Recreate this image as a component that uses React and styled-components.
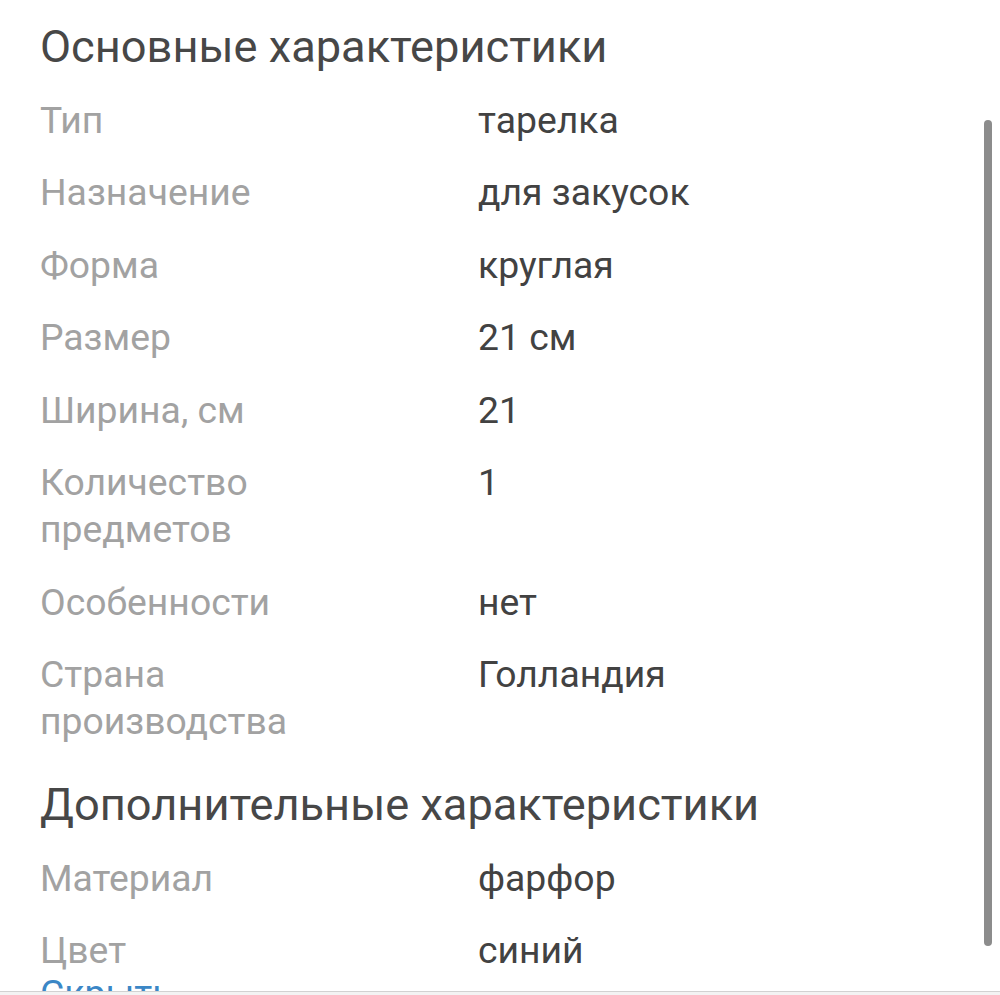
import React from "react";
import styled, { createGlobalStyle } from "styled-components";

const Global = createGlobalStyle`
  html, body { margin: 0; padding: 0; background: #ffffff; overflow: hidden; }
  body { font-family: Roboto, "Noto Sans", "Liberation Sans", sans-serif; }
`;

const Screen = styled.div`
  position: relative;
  height: 995px;
  overflow: hidden;
  background: #ffffff;
`;

const Content = styled.div`
  padding: 0 40px;
`;

const Heading = styled.h2`
  margin: ${(p) => (p.$first ? "19px" : "19.25px")} 0 8.75px;
  font-size: 45.2px;
  line-height: 56px;
  font-weight: 400;
  color: #474747;
  white-space: nowrap;
`;

const List = styled.div`
  display: flex;
  flex-direction: column;
`;

const Row = styled.div`
  display: grid;
  grid-template-columns: 438px 1fr;
  padding: 12.75px 0;
  font-size: 37.3px;
  line-height: 47px;
`;

const Label = styled.div`
  color: #a2a2a2;
`;

const Value = styled.div`
  color: #424242;
`;

const Link = styled.a`
  display: block;
  margin-top: -17px;
  font-size: 37.3px;
  line-height: 47px;
  color: #3b87c6;
  text-decoration: none;
`;

const ScrollThumb = styled.div`
  position: absolute;
  right: 8px;
  top: 120px;
  width: 8px;
  height: 826px;
  border-radius: 4px;
  background: #8c8c8c;
`;

const BottomEdge = styled.div`
  position: absolute;
  left: 0;
  right: 0;
  bottom: 0;
  height: 3px;
  border-top: 1px solid #d2d2d2;
  background: #f3f3f3;
`;

const main = [
  ["Тип", "тарелка"],
  ["Назначение", "для закусок"],
  ["Форма", "круглая"],
  ["Размер", "21 см"],
  ["Ширина, см", "21"],
  [["Количество", "предметов"], "1"],
  ["Особенности", "нет"],
  [["Страна", "производства"], "Голландия"],
];

const extra = [
  ["Материал", "фарфор"],
  ["Цвет", "синий"],
];

const Rows = ({ items }) => (
  <List>
    {items.map(([l, v]) => (
      <Row key={Array.isArray(l) ? l.join(" ") : l}>
        <Label>
          {Array.isArray(l) ? l.map((w) => <div key={w}>{w}</div>) : l}
        </Label>
        <Value>{v}</Value>
      </Row>
    ))}
  </List>
);

export default function App() {
  return (
    <Screen>
      <Global />
      <Content>
        <Heading $first>Основные характеристики</Heading>
        <Rows items={main} />
        <Heading>Дополнительные характеристики</Heading>
        <Rows items={extra} />
        <Link href="#">Скрыть</Link>
      </Content>
      <ScrollThumb />
      <BottomEdge />
    </Screen>
  );
}
